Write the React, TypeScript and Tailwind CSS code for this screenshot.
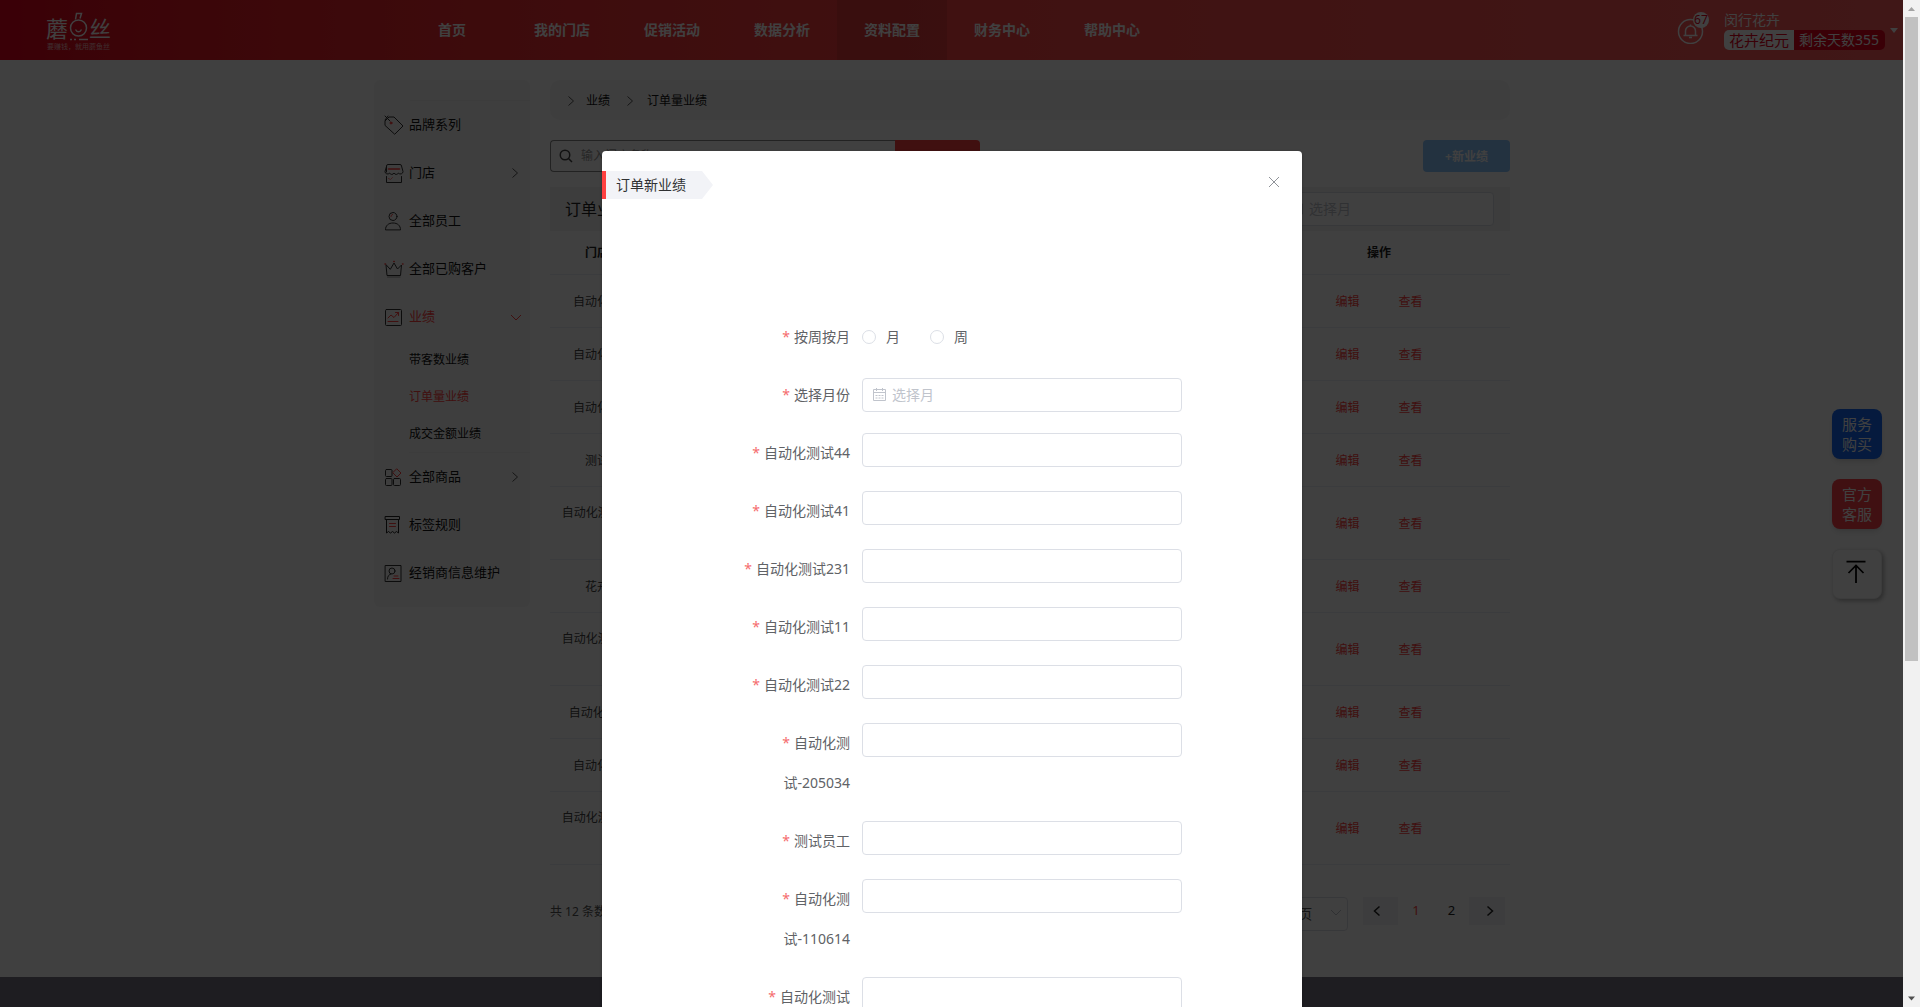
import React from "react";

type IconProps = { className?: string };

const stroke = {
  fill: "none",
  strokeWidth: 1,
  strokeLinecap: "round" as const,
  strokeLinejoin: "round" as const,
};

function Chevron({ dir, className }: { dir: "right" | "left" | "down"; className?: string }) {
  const d = { right: "M3.5 1.5 8.5 6 3.5 10.5", left: "M8.5 1.5 3.5 6 8.5 10.5", down: "M1 4 6 9 11 4" }[dir];
  return (
    <svg viewBox="0 0 12 12" className={className} fill="none" stroke="currentColor" aria-hidden="true">
      <path d={d} />
    </svg>
  );
}

function TagIcon({ className }: IconProps) {
  return (
    <svg viewBox="0 0 20 20" className={className} {...stroke} stroke="#333">
      <path d="M1 10V6l4-4h5l9 9-8 8zM1 1l5 5M4 1 1 5" />
      <circle cx="7" cy="8" r="1" fill="#ff4040" stroke="#ff4040" />
    </svg>
  );
}

function ShopIcon({ className }: IconProps) {
  return (
    <svg viewBox="0 0 20 20" className={className} {...stroke} stroke="#333">
      <path d="M2.5 9V3a1.500 1.500 0 0 1 1.500-1.500h12A1.500 1.500 0 0 1 17.500 3l1.500 5.500a2.500 2.500 0 0 1-4.500 1.500 2.500 2.500 0 0 1-4.500 0 2.500 2.500 0 0 1-4.500 0A2.500 2.500 0 0 1 1 8.500l1.500-5M2.500 13.500v6h15v-6" />
      <path d="M4.500 6h11" stroke="#ff4040" strokeWidth="1.500" />
      <path d="M4.500 15.500l2 1 2-2" stroke="#ff8080" />
    </svg>
  );
}

function PersonIcon({ className }: IconProps) {
  return (
    <svg viewBox="0 0 20 20" className={className} {...stroke} stroke="#333">
      <circle cx="9" cy="5.500" r="4" />
      <path d="M1.500 18.500c0-4 3-6.500 7.500-6.500s7.500 2.500 7.500 6.500z" />
      <path d="M7 5.500c0-1 .5-2 1.500-2" stroke="#ff4040" />
    </svg>
  );
}

function CrownIcon({ className }: IconProps) {
  return (
    <svg viewBox="0 0 20 20" className={className} {...stroke} stroke="#333">
      <path d="M2 6l1 10.500h13.500L17.500 6 13.500 10 10 4 6.500 10z" />
      <path d="M3.500 18h12.500" stroke="#999" />
      <path d="M1 5h.5M9.750 2.500h.5M18.500 5h.5" stroke="#ff4040" strokeWidth="1.500" />
    </svg>
  );
}

function TrendIcon({ className }: IconProps) {
  return (
    <svg viewBox="0 0 20 20" className={className} {...stroke} stroke="#333">
      <rect x="1.500" y="2.500" width="16" height="16" rx="1" />
      <path d="M4 11l3-3 3 2.500 4.500-5M11.500 5.500h3v3M4 14.500h10" stroke="#ff4040" />
    </svg>
  );
}

function GoodsIcon({ className }: IconProps) {
  return (
    <svg viewBox="0 0 20 20" className={className} {...stroke} stroke="#333">
      <rect x="1.500" y="2.500" width="6.500" height="7" rx="1" />
      <rect x="1.500" y="11.500" width="6.500" height="7" rx="1" />
      <rect x="9.500" y="11.500" width="7" height="7" rx="1" />
      <path d="M13 2l4 4-4 4-4-4z" stroke="#ff4040" />
    </svg>
  );
}

function RuleIcon({ className }: IconProps) {
  return (
    <svg viewBox="0 0 20 20" className={className} {...stroke} stroke="#222">
      <path d="M1.500 1.500h14v3h-14zM2.500 4.500v13.500l2-1.500 2 1.500 2-1.500 2 1.500 2-1.500 2 1.500V4.500" />
      <path d="M5.500 8.500h6M5.500 11.500h6" stroke="#ff4040" />
    </svg>
  );
}

function DealerIcon({ className }: IconProps) {
  return (
    <svg viewBox="0 0 20 20" className={className} {...stroke} stroke="#333">
      <rect x="1.500" y="2.500" width="15.500" height="16" />
      <circle cx="8" cy="8" r="3" />
      <path d="M3.500 16c0-3 1.500-4.500 3.500-5" />
      <path d="M10 13h4M9 15.500h6" stroke="#ff4040" />
    </svg>
  );
}

function CalendarIcon({ className }: IconProps) {
  return (
    <svg viewBox="0 0 14 14" className={className} fill="none" stroke="currentColor" aria-hidden="true">
      <path d="M.5 1.500h12v11H.5zM.5 4.500h12M3.500 0v3M9.500 0v3M2.500 7.500h2M5.500 7.500h2M8.500 7.500h2M2.500 10h2M5.500 10h2M8.500 10h2" />
    </svg>
  );
}

const navItems = ["首页", "我的门店", "促销活动", "数据分析", "资料配置", "财务中心", "帮助中心"];

function Header() {
  return (
    <header className="flex h-[60px] items-center bg-linear-to-r from-[#e6001c] via-[#ff4444] via-50% to-[#ff5c5c] text-white">
      <a href="#" className="w-[397px] shrink-0 pl-[46px]" aria-label="蘑鱼丝">
        <svg width="70" height="46" viewBox="0 -4 70 46" fill="none" stroke="#fff" strokeWidth="1.500">
          <text x="0" y="26" fontSize="22" fill="#fff" stroke="none">蘑</text>
          <text x="43" y="26" fontSize="22" fill="#fff" stroke="none">丝</text>
          <circle cx="32.500" cy="17" r="8" />
          <path d="M29.500 8.500l1-6h5l-1.500 5M29.500 18.500c1.500 3 4.500 3 6 0M24 28.500h2M28 28.500h2M33 28.500h9" />
          <text x="1" y="38" fontSize="7" fill="#fff" fillOpacity="0.700" stroke="none">要赚钱，就用蘑鱼丝</text>
        </svg>
      </a>
      <nav className="flex h-full">
        {navItems.map((n) => (
          <a
            key={n}
            href="#"
            className={
              n === "资料配置"
                ? "flex w-[110px] items-center justify-center bg-black/10 text-sm font-bold"
                : "flex w-[110px] items-center justify-center text-sm font-bold"
            }
          >
            {n}
          </a>
        ))}
      </nav>
      <div className="ml-auto flex items-center pr-[5px]">
        <button className="relative mr-5 size-[27px]" aria-label="消息">
          <svg viewBox="0 0 27 27" className="size-[27px]" fill="none" stroke="#fff" strokeWidth="1.500">
            <circle cx="13.500" cy="14.500" r="12" />
            <path d="M6.500 18.500h14M8.500 18.500V14a5 5 0 0 1 10 0v4.500M13.500 7.500v1.500M12 20.500h3" />
          </svg>
          <span className="absolute -top-[5px] left-4 flex size-4 items-center justify-center rounded-full bg-white text-xs text-[#e6001c]">
            67
          </span>
        </button>
        <div>
          <div className="text-sm leading-5">闵行花卉</div>
          <div className="flex overflow-hidden rounded-[5px] leading-5">
            <span className="bg-white px-[5px] text-[15px] text-[#e6001c]">花卉纪元</span>
            <span className="bg-[#e6001c] pr-[6px] pl-[5px] text-sm leading-5">剩余天数355</span>
          </div>
        </div>
        <svg viewBox="0 0 8 5" className="ml-[5px] h-[5px] w-2" fill="#fff">
          <path d="M0 0h8L4 5z" />
        </svg>
      </div>
    </header>
  );
}

type MenuItem = {
  label: string;
  Icon: (p: IconProps) => React.ReactElement;
  more?: boolean;
  children?: string[];
};

const menu: MenuItem[] = [
  { label: "品牌系列", Icon: TagIcon },
  { label: "门店", Icon: ShopIcon, more: true },
  { label: "全部员工", Icon: PersonIcon },
  { label: "全部已购客户", Icon: CrownIcon },
  { label: "业绩", Icon: TrendIcon, children: ["带客数业绩", "订单量业绩", "成交金额业绩"] },
  { label: "全部商品", Icon: GoodsIcon, more: true },
  { label: "标签规则", Icon: RuleIcon },
  { label: "经销商信息维护", Icon: DealerIcon },
];

function Sidebar() {
  return (
    <aside className="w-[156px] shrink-0 self-start rounded-md bg-[#f7f7f7] pt-5 pb-[10px] text-[#111]">
      <div className="ml-9 border-t border-[#efefef]" />
      <ul>
        {menu.map(({ label, Icon, more, children }) => (
          <li key={label}>
            <a
              href="#"
              className={
                children
                  ? "flex h-12 items-center pr-2 pl-[10px] text-[13px] text-[#ff4040]"
                  : "flex h-12 items-center pr-2 pl-[10px] text-[13px]"
              }
            >
              <Icon className="mr-[5px] size-5 shrink-0" />
              <span className="grow whitespace-nowrap">{label}</span>
              {more && <Chevron dir="right" className="mr-px size-3 text-[#555]" />}
              {children && <Chevron dir="down" className="size-3" />}
            </a>
            {children && (
              <ul className="ml-[35px] border-b border-[#efefef] text-xs">
                {children.map((c) => (
                  <li key={c}>
                    <a
                      href="#"
                      className={
                        c === "订单量业绩"
                          ? "flex h-[37px] items-center text-[#ff4040]"
                          : "flex h-[37px] items-center"
                      }
                    >
                      {c}
                    </a>
                  </li>
                ))}
              </ul>
            )}
          </li>
        ))}
      </ul>
    </aside>
  );
}

const rows = [
  { lines: ["自动化测试店"], tall: false },
  { lines: ["自动化测试店"], tall: false },
  { lines: ["自动化测试店"], tall: false },
  { lines: ["测试门店"], tall: false },
  { lines: ["自动化测试11061", "4"], tall: true },
  { lines: ["花卉门店"], tall: false },
  { lines: ["自动化测试20503", "4"], tall: true },
  { lines: ["自动化测试231"], tall: false },
  { lines: ["自动化测试店"], tall: false },
  { lines: ["自动化测试11061", "4"], tall: true },
];

function Content() {
  return (
    <section className="min-w-0 grow">
      <nav className="flex h-10 items-center rounded-[10px] bg-[#f7f7f7] pt-[2px] pl-[15px] text-xs text-[#111]">
        <Chevron dir="right" className="mr-[9px] size-3 text-[#555]" />
        <a href="#">业绩</a>
        <Chevron dir="right" className="mr-[11px] ml-[14px] size-3 text-[#555]" />
        <a href="#">订单量业绩</a>
      </nav>

      <div className="mt-5 flex items-center justify-between">
        <form className="flex h-8 w-[430px]">
          <label className="flex grow items-center rounded-l border border-r-0 border-[#888] pl-2">
            <svg viewBox="0 0 14 14" className="mr-2 size-[14px]" fill="none" stroke="#444" strokeWidth="1.500">
              <circle cx="6" cy="6" r="4.750" />
              <path d="M9.500 9.500 13 13" />
            </svg>
            <input
              className="min-w-0 grow text-xs outline-none placeholder:text-[#999]"
              placeholder="输入门店名称"
              aria-label="搜索门店"
            />
          </label>
          <button type="button" className="w-[85px] rounded-r bg-[#ff4040] pt-1 text-xs text-white">
            搜索
          </button>
        </form>
        <button className="h-8 w-[87px] rounded bg-[#8cc5ff] pt-[2px] text-xs font-bold text-white">+新业绩</button>
      </div>

      <div className="mt-[15px] flex h-11 items-center justify-between bg-[#f2f2f2] pr-4 pl-[15px]">
        <h1 className="text-base text-[#222]">订单业绩</h1>
        <label className="flex h-[34px] w-[215px] items-center rounded border border-[#dcdfe6] bg-white pl-[11px] text-[#c0c4cc]">
          <CalendarIcon className="mr-[5px] size-[14px]" />
          <input
            className="min-w-0 grow text-sm outline-none placeholder:text-[#c0c4cc]"
            placeholder="选择月"
            aria-label="筛选月份"
          />
        </label>
      </div>

      <table className="w-full table-fixed border-collapse text-center text-xs leading-[23px] text-[#444]">
        <thead>
          <tr className="h-[43px] border-b border-[#ebeef5] text-[#222]">
            <th className="w-[118px]">门店名称</th>
            <th />
            <th className="w-[262px]">操作</th>
          </tr>
        </thead>
        <tbody>
          {rows.map((r, i) => (
            <tr
              key={i}
              className={r.tall ? "h-[73px] border-b border-[#ebeef5]" : "h-[53px] border-b border-[#ebeef5]"}
            >
              <td className="pt-[2px] whitespace-nowrap">
                {r.lines.map((l) => (
                  <div key={l}>{l}</div>
                ))}
              </td>
              <td />
              <td className="pt-[2px]">
                <div className="flex justify-center gap-[39px] text-[#ff4040]">
                  <button>编辑</button>
                  <button>查看</button>
                </div>
              </td>
            </tr>
          ))}
        </tbody>
      </table>

      <div className="mt-8 flex items-start pr-[5px] pb-[46px] text-[13px] text-[#222]">
        <span className="mr-auto text-xs leading-[30px] text-[#555]">共 12 条数据</span>
        <div className="relative mr-[15px]">
          <select
            aria-label="每页条数"
            className="h-[34px] w-[110px] appearance-none rounded border border-[#dcdfe6] pl-6 text-sm text-[#555] outline-none"
          >
            <option>10条/页</option>
          </select>
          <Chevron dir="down" className="pointer-events-none absolute top-[9px] right-[6px] size-3 text-[#c0c4cc]" />
        </div>
        <button className="flex h-7 w-[35px] items-center justify-center bg-[#f4f4f5]" aria-label="上一页">
          <Chevron dir="left" className="mr-2 size-3 stroke-[1.5px]" />
        </button>
        <button className="h-7 w-9 text-[#ff4040]">1</button>
        <button className="h-7 w-[35px]">2</button>
        <button className="flex h-7 w-9 items-center justify-center bg-[#f4f4f5]" aria-label="下一页">
          <Chevron dir="right" className="ml-[6px] size-3 stroke-[1.5px]" />
        </button>
      </div>
    </section>
  );
}

function FloatingTools() {
  return (
    <div className="absolute top-[409px] right-[21px] flex flex-col gap-5 text-[15px] leading-5 text-white">
      <button className="size-[50px] rounded-lg bg-[#1468f5] px-2 shadow-md">服务购买</button>
      <button className="size-[50px] rounded-lg bg-[#ff4048] px-2 shadow-md">官方客服</button>
      <button
        className="flex size-[50px] items-center justify-center rounded-lg border border-[#eee] bg-white pr-[2px] pb-1 shadow-[2px_2px_4px_rgba(0,0,0,0.3)]"
        aria-label="返回顶部"
      >
        <svg viewBox="0 0 24 24" className="size-6" fill="none" stroke="#000" strokeWidth="1.750">
          <path d="M2.500 1.500h19M12 23V6M4.500 13 12 5.500 19.500 13" />
        </svg>
      </button>
    </div>
  );
}

const fields = [
  "自动化测试44",
  "自动化测试41",
  "自动化测试231",
  "自动化测试11",
  "自动化测试22",
  "自动化测试-205034",
  "测试员工",
  "自动化测试-110614",
  "自动化测试",
];

const labelClass =
  "w-[120px] shrink-0 pr-3 text-right before:mr-1 before:text-[#f56c6c] before:content-['*']";

function RadioOption({ label }: { label: string }) {
  return (
    <label className="mr-[30px] flex items-center gap-[10px]">
      <input
        type="radio"
        name="period"
        className="size-[14px] appearance-none rounded-full border border-[#dcdfe6] checked:border-4 checked:border-[#409eff]"
      />
      {label}
    </label>
  );
}

function Dialog() {
  return (
    <div
      role="dialog"
      aria-label="订单新业绩"
      className="h-full w-[700px] rounded-t-sm bg-white pt-5 text-sm text-[#606266] shadow-[0_1px_3px_rgba(0,0,0,0.3)]"
    >
      <div className="flex h-7 items-center">
        <h2 className="flex h-7 items-center border-l-4 border-[#ff4040] bg-[#f2f3f7] pr-4 pl-[10px] text-[#303133]">
          订单新业绩
        </h2>
        <svg viewBox="0 0 11 28" className="h-7 w-[11px]" fill="#f2f3f7">
          <path d="M0 0l11 14L0 28z" />
        </svg>
        <button className="mr-[22px] mb-[6px] ml-auto text-[#909399]" aria-label="关闭">
          <svg viewBox="0 0 12 12" className="size-3" fill="none" stroke="currentColor">
            <path d="M1 1l10 10M11 1 1 11" />
          </svg>
        </button>
      </div>
      <form className="flex flex-col gap-[18px] pt-[118px] pr-[118px] pl-[140px] leading-10">
        <div className="flex" role="radiogroup" aria-label="按周按月">
          <span className={labelClass}>按周按月</span>
          <RadioOption label="月" />
          <RadioOption label="周" />
        </div>
        <div className="flex items-center">
          <label htmlFor="month" className={labelClass}>
            选择月份
          </label>
          <div className="flex h-[34px] w-80 items-center rounded border border-[#dcdfe6] pl-[10px] text-[#c0c4cc]">
            <CalendarIcon className="mr-[5px] size-[14px]" />
            <input
              id="month"
              className="min-w-0 grow text-sm outline-none placeholder:text-[#c0c4cc]"
              placeholder="选择月"
            />
          </div>
        </div>
        {fields.map((f, i) => (
          <div key={f} className="flex items-start">
            <label htmlFor={`field-${i}`} className={labelClass}>
              {f}
            </label>
            <input
              id={`field-${i}`}
              className="h-[34px] w-80 rounded border border-[#dcdfe6] px-[15px] text-sm outline-none"
            />
          </div>
        ))}
      </form>
    </div>
  );
}

function ScrollRail() {
  return (
    <div className="flex w-[17px] shrink-0 flex-col items-center bg-[#f1f1f1]" aria-hidden="true">
      <svg viewBox="0 0 17 17" className="size-[17px] shrink-0" fill="#a3a3a3">
        <path d="M8.500 7l3.500 4H5z" />
      </svg>
      <div className="h-[64%] w-[13px] bg-[#c1c1c1]" />
      <svg viewBox="0 0 17 17" className="mt-auto size-[17px] shrink-0" fill="#505050">
        <path d="M5 6.500h7L8.500 10.500z" />
      </svg>
    </div>
  );
}

export default function App() {
  return (
    <div className="flex h-screen overflow-hidden bg-white font-['Noto_Sans','Noto_Sans_CJK_SC',sans-serif]">
      <div className="relative min-w-0 grow overflow-hidden">
        <Header />
        <main className="mx-auto flex max-w-[1155px] gap-5 pt-5 pr-[19px]">
          <Sidebar />
          <Content />
        </main>
        <footer className="h-20 bg-[#787484]" />
        <FloatingTools />
        <div className="absolute inset-0 flex justify-center overflow-hidden bg-black/75 pt-[151px] pl-px">
          <Dialog />
        </div>
      </div>
      <ScrollRail />
    </div>
  );
}
